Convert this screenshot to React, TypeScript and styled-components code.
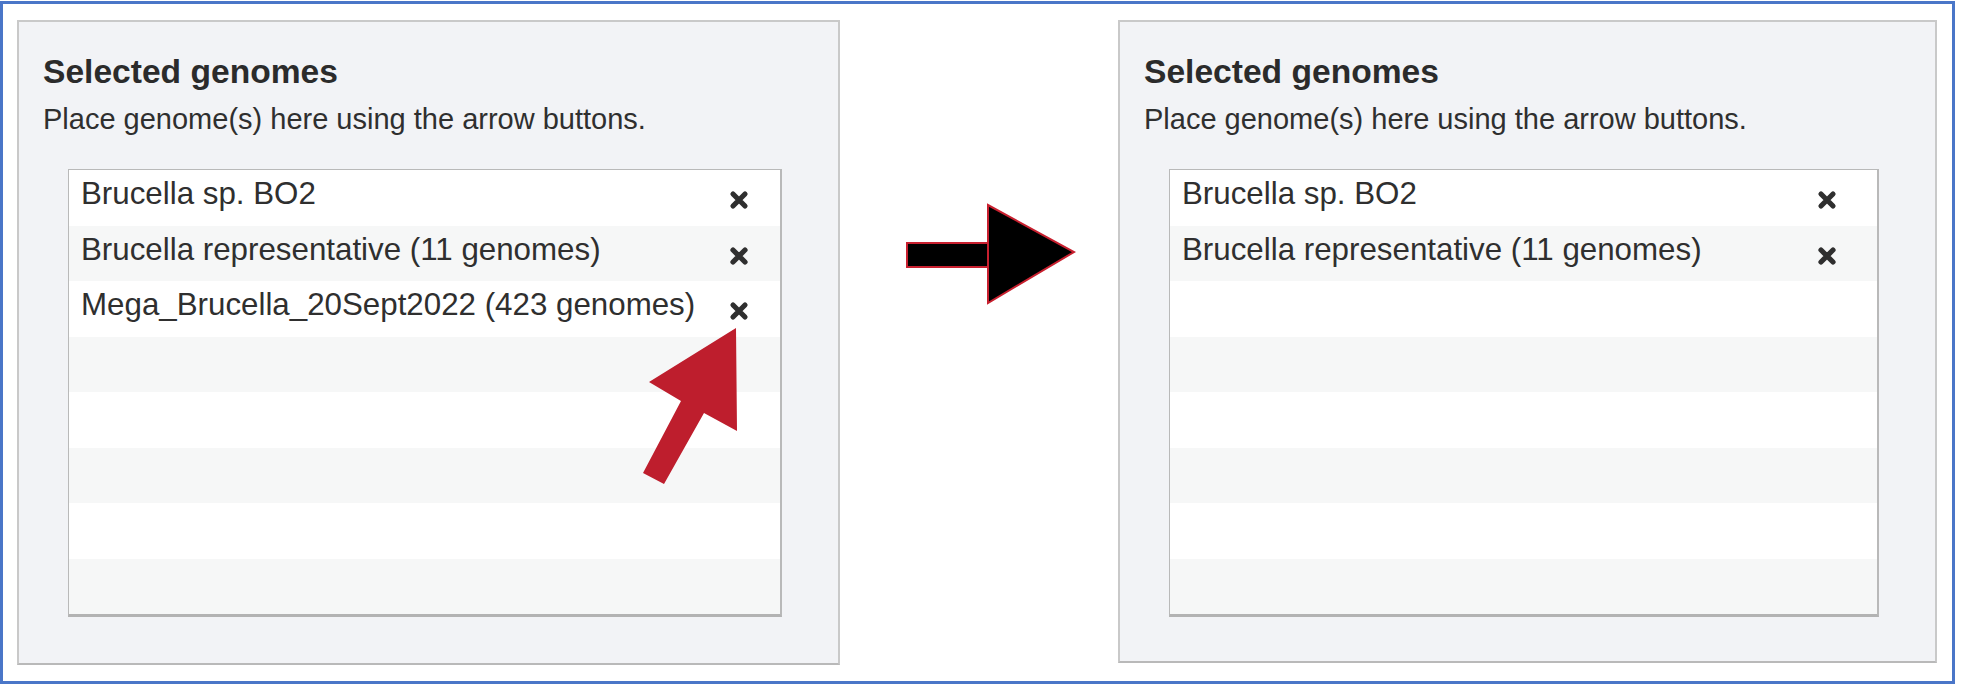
import React from "react";
import styled, { createGlobalStyle } from "styled-components";

const GlobalStyle = createGlobalStyle`
  html, body {
    margin: 0;
    padding: 0;
    background: #ffffff;
  }
  body {
    font-family: "Liberation Sans", Arial, Helvetica, sans-serif;
    color: #2f2f2f;
  }
`;

const Frame = styled.div`
  position: relative;
  box-sizing: border-box;
  margin-top: 1px;
  width: 1955px;
  height: 683px;
  border: 3px solid #4a76c8;
  padding: 16px 15px 0 14px;
  display: flex;
  align-items: flex-start;
`;

const Panel = styled.section<{ $width: number; $bottom: number }>`
  box-sizing: border-box;
  flex: none;
  width: ${(p) => p.$width}px;
  background: #f2f3f6;
  border: 2px solid #c9c9c9;
  border-bottom-color: #b9b9b9;
  padding: 31px 56px ${(p) => p.$bottom}px 24px;
`;

const Heading = styled.h2`
  margin: 0;
  font-size: 33.6px;
  line-height: 38px;
  font-weight: 700;
  color: #2b2b2b;
`;

const Hint = styled.p`
  margin: 11px 0 0;
  font-size: 29px;
  line-height: 34px;
  color: #2f2f2f;
`;

const ListBox = styled.ul`
  list-style: none;
  margin: 33px 0 0 25px;
  padding: 0;
  background: #ffffff;
  border: 1px solid #b9b9b9;
  border-right-width: 2px;
  border-bottom: 3px solid #b3b3b3;
`;

const Row = styled.li<{ $inset: number }>`
  box-sizing: border-box;
  height: 55.5px;
  display: flex;
  justify-content: space-between;
  align-items: flex-start;
  padding: 0 ${(p) => p.$inset}px 0 12px;
  &:nth-child(even) {
    background: #f6f7f7;
  }
`;

const RowLabel = styled.span`
  font-size: 31.3px;
  line-height: 48px;
  color: #2f2f2f;
  white-space: nowrap;
`;

const RemoveButton = styled.button`
  flex: none;
  width: 20px;
  height: 20px;
  margin-top: 20px;
  padding: 0;
  border: none;
  background: transparent;
  display: flex;
  cursor: pointer;
`;

const Gutter = styled.div`
  flex: 1;
  display: flex;
  padding: 183px 0 0 65px;
`;

const Pointer = styled.svg`
  position: absolute;
  left: 637px;
  top: 321px;
  width: 100px;
  height: 162px;
  pointer-events: none;
`;

const CloseIcon = () => (
  <svg width="20" height="20" viewBox="0 0 20 20">
    <path
      d="M4 4 L16 16 M16 4 L4 16"
      stroke="#2f2f2f"
      strokeWidth="5.2"
      strokeLinecap="round"
      fill="none"
    />
  </svg>
);

const MoveArrow = () => (
  <svg width="171" height="102" viewBox="0 0 171 102">
    <rect x="2" y="40" width="81" height="24" fill="#000" stroke="#c8202f" strokeWidth="2" />
    <polygon points="83,2 83,100 169,49" fill="#000" stroke="#c8202f" strokeWidth="2" strokeLinejoin="miter" />
  </svg>
);

type ListProps = { items: string[]; inset: number };

const GenomeList = ({ items, inset }: ListProps) => {
  const rows = Array.from({ length: 8 }, (_, i) => items[i] ?? null);
  return (
    <ListBox>
      {rows.map((item, i) => (
        <Row key={i} $inset={inset}>
          {item && (
            <>
              <RowLabel>{item}</RowLabel>
              <RemoveButton aria-label="Remove">
                <CloseIcon />
              </RemoveButton>
            </>
          )}
        </Row>
      ))}
    </ListBox>
  );
};

type PanelProps = { width: number; items: string[]; inset: number; bottom: number };

const SelectedPanel = ({ width, items, inset, bottom }: PanelProps) => (
  <Panel $width={width} $bottom={bottom}>
    <Heading>Selected genomes</Heading>
    <Hint>Place genome(s) here using the arrow buttons.</Hint>
    <GenomeList items={items} inset={inset} />
  </Panel>
);

export default function App() {
  return (
    <>
      <GlobalStyle />
      <Frame>
        <SelectedPanel
          width={823}
          inset={31}
          bottom={46}
          items={[
            "Brucella sp. BO2",
            "Brucella representative (11 genomes)",
            "Mega_Brucella_20Sept2022 (423 genomes)",
          ]}
        />
        <Gutter>
          <MoveArrow />
        </Gutter>
        <SelectedPanel
          width={819}
          inset={40}
          bottom={44}
          items={["Brucella sp. BO2", "Brucella representative (11 genomes)"]}
        />
        <Pointer viewBox="0 0 100 162">
          <polygon
            points="96,3 9,57 41,76 3,148 24,159 64,88 97,106"
            fill="#be1e2d"
          />
        </Pointer>
      </Frame>
    </>
  );
}
